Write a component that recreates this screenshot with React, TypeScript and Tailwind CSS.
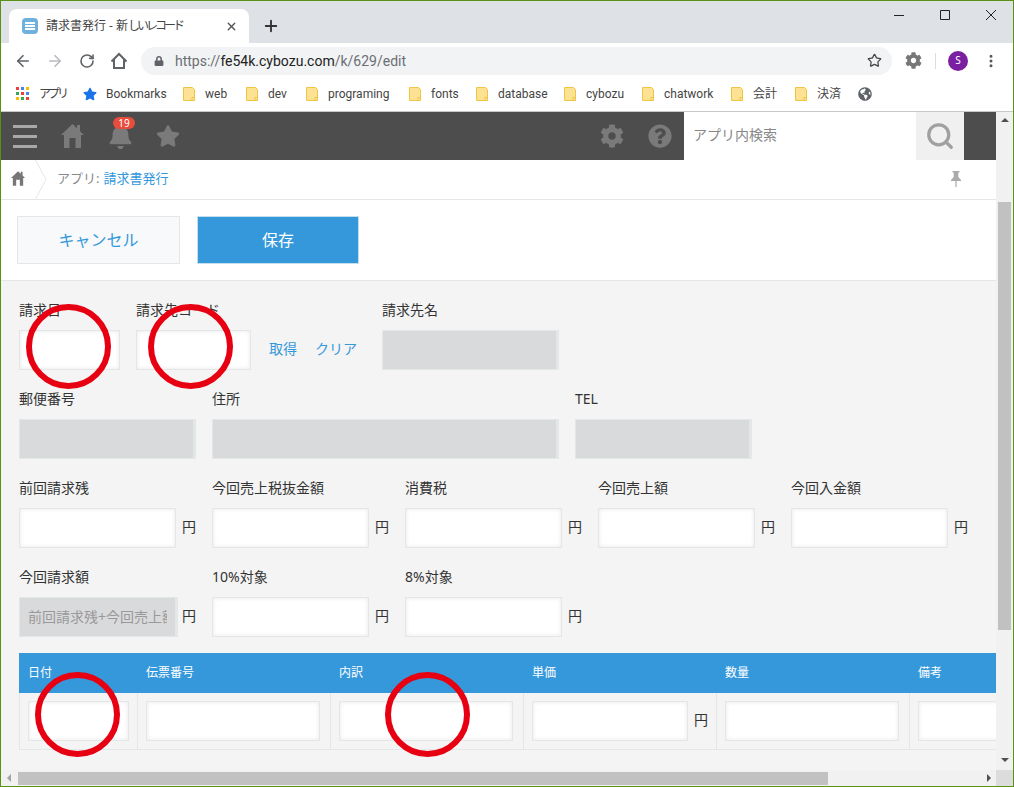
import { ArrowLeft, ArrowRight, RotateCw, Star, X, Plus, MoreVertical, Search } from 'lucide-react';
import { FaBell, FaCog, FaGlobeAmericas, FaLock, FaQuestionCircle, FaStar } from 'react-icons/fa';

const font = "font-['Noto_Sans','Noto_Sans_CJK_JP',sans-serif]";

const bookmarks = [
  { label: 'web', w: 'w-[63px]' },
  { label: 'dev', w: 'w-[60px]' },
  { label: 'programing', w: 'w-[103px]' },
  { label: 'fonts', w: 'w-[67px]' },
  { label: 'database', w: 'w-[88px]' },
  { label: 'cybozu', w: 'w-[78px]' },
  { label: 'chatwork', w: 'w-[89px]' },
  { label: '会計', w: 'w-[64px]' },
  { label: '決済', w: 'w-[63px]' },
];

const appColors = ['#ea4335', '#4285f4', '#fbbc05', '#34a853', '#ea4335', '#4285f4', '#fbbc05', '#34a853', '#ea4335'];

function AppsIcon() {
  return (
    <svg width="13" height="13" viewBox="0 0 13 13">
      {appColors.map((c, i) => (
        <rect key={i} x={(i % 3) * 5} y={Math.floor(i / 3) * 5} width="3" height="3" fill={c} />
      ))}
    </svg>
  );
}

function FolderIcon() {
  return (
    <svg width="12" height="14" viewBox="0 0 12 14" className="shrink-0">
      <path d="M.5.5h9l2 2v11H.5z" fill="#fde293" stroke="#eec643" />
      <path d="M9 10.5h2.5v3H9z" fill="#fde293" stroke="#eec643" />
    </svg>
  );
}

function HomeIcon({ className }: { className: string }) {
  return (
    <svg viewBox="0 0 23 24" className={className} fill="currentColor">
      <path d="M11.5 0 16 4.3V1h3v6.2L23 11h-3v13h-5.5V14h-6v10H3V11H0z" />
    </svg>
  );
}

function PinIcon() {
  return (
    <svg width="10" height="16" viewBox="0 0 10 16" className="mr-[35px] mb-[2px]" fill="#aaa">
      <path d="M1.5 0h7v1.5H7.3V6L10 9v1H5.6v6h-1.2v-6H0V9l2.7-3V1.500H1.5z" />
    </svg>
  );
}

function Input({ className }: { className: string }) {
  return <div className={`h-[40px] shrink-0 bg-white border border-[#e3e7e8] shadow-[inset_0_0_4px_rgba(55,55,55,0.12)] ${className}`} />;
}

function Disabled({ className, text }: { className: string; text?: string }) {
  return (
    <div className={`h-[40px] shrink-0 bg-[#d9dadc] border border-[#e3e7e8] border-r-[3px] pl-[8px] pb-[2px] flex items-center text-[14px] text-[#999] ${className}`}>
      {text && <div className="w-[139px] overflow-hidden whitespace-nowrap">{text}</div>}
    </div>
  );
}

function Label({ children }: { children: string }) {
  return <div className="h-[20px] leading-[18px] text-[14px] text-[#333] mb-[9px] whitespace-nowrap">{children}</div>;
}

function Yen() {
  return <span className="ml-[6px] pb-[3px] text-[14px] text-[#333]">円</span>;
}

function MoneyField({ label }: { label: string }) {
  return (
    <div className="w-[193px] shrink-0">
      <Label>{label}</Label>
      <div className="flex items-center">
        <Input className="w-[157px]" />
        <Yen />
      </div>
    </div>
  );
}

function Circle({ className }: { className: string }) {
  return <div className={`absolute w-[85px] h-[85px] rounded-full border-[6px] border-[#e60012] ${className}`} />;
}

const columns = [
  { label: '日付', cell: 'w-[118px]', input: 'w-[101px]' },
  { label: '伝票番号', cell: 'w-[193px]', input: 'w-[174px]' },
  { label: '内訳', cell: 'w-[193px]', input: 'w-[174px]' },
  { label: '単価', cell: 'w-[193px]', input: 'w-[156px]', yen: true },
  { label: '数量', cell: 'w-[193px]', input: 'w-[174px]' },
  { label: '備考', cell: 'w-[193px]', input: 'w-[174px]' },
];

export default function App() {
  return (
    <div className={`relative w-[1014px] h-[787px] border border-[#5a9216] bg-white overflow-hidden flex flex-col ${font}`}>
      {/* Browser tabs */}
      <div className="h-[42px] shrink-0 bg-[#dee1e6] flex pt-[8px] pl-[8px]">
        <div className="w-[240px] h-[34px] bg-white rounded-t-[8px] flex items-center pl-[13px] pr-[11px]">
          <div className="w-[16px] h-[16px] rounded-[4px] bg-[#6fb0dc] flex flex-col items-center justify-center gap-[1px]">
            <div className="w-[10px] h-[2px] bg-white" />
            <div className="w-[10px] h-[2px] bg-white" />
            <div className="w-[10px] h-[2px] bg-white" />
          </div>
          <span className="ml-[8px] text-[12px] text-[#444] flex-1 whitespace-nowrap overflow-hidden">
            請求書発行 - 新<span className="tracking-[-3px]">しいレコード</span>
          </span>
          <X size={13} strokeWidth={2.5} className="text-[#555]" />
        </div>
        <Plus size={18} strokeWidth={2.5} className="ml-[13px] mt-[8px] text-[#333]" />
        {/* Window controls */}
        <svg width="102" height="10" viewBox="0 0 102 10" className="ml-auto mr-[17px] mt-[1px]" fill="none" stroke="#222">
          <path d="M0 5.500h10" />
          <path d="M46.500.5h9v9h-9z" />
          <path d="m92 0 10 10M102 0 92 10" />
        </svg>
      </div>

      {/* Browser toolbar */}
      <div className="h-[35px] shrink-0 flex items-center text-[#5f6368]">
        <ArrowLeft size={18} strokeWidth={2.2} className="ml-[13px]" />
        <ArrowRight size={18} strokeWidth={2.2} className="ml-[14px] text-[#b9bbbe]" />
        <RotateCw size={16} strokeWidth={2.4} className="ml-[15px]" />
        <svg width="18" height="18" viewBox="0 0 18 18" className="ml-[15px]" fill="none" stroke="#5f6368" strokeWidth="2">
          <path d="M1.5 9.500 9 2l7.500 7.500M4 7.500V16h10V7.500" />
        </svg>
        <div className="ml-[13px] w-[751px] h-[28px] rounded-full bg-[#f1f3f4] flex items-center pl-[13px] pr-[10px]">
          <FaLock size={10} />
          <span className="ml-[11px] pt-[1px] font-['Roboto',sans-serif] text-[14px] text-[#6b6f73] whitespace-nowrap">
            https://<span className="text-[#222]">fe54k.cybozu.com</span>/k/629/edit
          </span>
          <Star size={15} strokeWidth={2} className="ml-auto text-[#444]" />
        </div>
        <FaCog size={17} className="ml-[13px] text-[#777]" />
        <div className="ml-[13px] w-px h-[16px] bg-[#dcdcdc]" />
        <div className="ml-[12px] w-[20px] h-[20px] rounded-full bg-[#7b1fa2] text-white text-[10px] flex items-center justify-center">S</div>
        <MoreVertical size={16} strokeWidth={2.5} className="ml-[15px] text-[#555]" />
      </div>

      {/* Bookmarks bar */}
      <div className="h-[34px] shrink-0 flex items-center pl-[15px] pb-[2px] font-['Roboto','Noto_Sans_CJK_JP',sans-serif] text-[12px] text-[#444] border-b border-[#c8c8c8]">
        <AppsIcon />
        <span className="ml-[10px] w-[44px] text-[12px] tracking-[-3px]">アプリ</span>
        <FaStar size={14} className="text-[#1a73e8]" />
        <span className="ml-[9px] w-[77px]">Bookmarks</span>
        {bookmarks.map(b => (
          <div key={b.label} className={`${b.w} shrink-0 flex items-center gap-[10px] whitespace-nowrap`}>
            <FolderIcon />
            <span>{b.label}</span>
          </div>
        ))}
        <FaGlobeAmericas size={14} className="text-[#5f6368]" />
      </div>

      {/* Page with scrollbars */}
      <div className="flex-1 min-h-0 flex">
        <div className="w-[995px] shrink-0 flex flex-col overflow-hidden">
          {/* App header */}
          <div className="h-[48px] shrink-0 bg-[#4d4d4d] flex items-center">
            <div className="ml-[12px] w-[24px] flex flex-col gap-[7px]">
              <div className="h-[3px] bg-[#a8a8a8]" />
              <div className="h-[3px] bg-[#a8a8a8]" />
              <div className="h-[3px] bg-[#a8a8a8]" />
            </div>
            <HomeIcon className="ml-[24px] w-[23px] h-[24px] text-[#7a7a7a]" />
            <div className="relative ml-[24px]">
              <FaBell size={25} className="text-[#7a7a7a]" />
              <span className="absolute -top-[7px] left-[5px] w-[22px] h-[12px] rounded-full bg-[#e74c3c] text-white text-[10px] leading-[12px] text-center">19</span>
            </div>
            <FaStar size={24} className="ml-[23px] text-[#7a7a7a]" />
            <FaCog size={24} className="ml-[420px] text-[#7a7a7a]" />
            <FaQuestionCircle size={24} className="ml-[24px] text-[#7a7a7a]" />
            <div className="ml-[12px] w-[232px] h-[48px] bg-white flex items-center pl-[9px] pb-[3px] text-[14px] text-[#888]">アプリ内検索</div>
            <div className="w-[48px] h-[48px] bg-[#f0f0f0] flex items-center justify-center">
              <Search size={30} strokeWidth={2.6} className="text-[#a0a0a0]" />
            </div>
          </div>

          {/* Breadcrumb */}
          <div className="relative h-[39px] shrink-0 bg-white flex items-center border-b border-[#e3e7e8] box-content">
            <HomeIcon className="ml-[10px] mb-[2px] w-[14px] h-[15px] text-[#777]" />
            <svg width="12" height="39" viewBox="0 0 12 39" className="ml-[10px]" fill="none" stroke="#e3e7e8">
              <path d="M.5 0 11 19.500.5 39" />
            </svg>
            <span className="ml-[10px] pb-[2px] text-[13px] text-[#888]">アプリ:</span>
            <span className="ml-[4px] pb-[2px] text-[13px] text-[#3498db]">請求書発行</span>
            <div className="ml-auto"><PinIcon /></div>
          </div>

          {/* Save / cancel */}
          <div className="h-[80px] shrink-0 bg-white flex items-center pl-[16px] border-b border-[#e3e7e8] box-content">
            <button className="w-[163px] h-[48px] bg-[#f7f9fa] border border-[#e3e7e8] text-[16px] text-[#3498db]">キャンセル</button>
            <button className="ml-[17px] w-[162px] h-[48px] bg-[#3498db] border border-[#c5dcec] text-[16px] text-white">保存</button>
          </div>

          {/* Form */}
          <div className="flex-1 min-h-0 bg-[#f4f4f4] pl-[18px] pt-[20px] overflow-hidden">
            <div className="flex mb-[20px]">
              <div className="w-[117px] shrink-0">
                <Label>請求日</Label>
                <Input className="w-[101px]" />
              </div>
              <div className="w-[246px] shrink-0">
                <Label>請求先コード</Label>
                <div className="flex items-center text-[14px] text-[#3498db]">
                  <Input className="w-[115px]" />
                  <span className="ml-[18px] pb-[3px]">取得</span>
                  <span className="ml-[18px] pb-[3px]">クリア</span>
                </div>
              </div>
              <div>
                <Label>請求先名</Label>
                <Disabled className="w-[177px]" />
              </div>
            </div>

            <div className="flex mb-[20px]">
              <div className="w-[193px] shrink-0">
                <Label>郵便番号</Label>
                <Disabled className="w-[177px]" />
              </div>
              <div className="w-[363px] shrink-0">
                <Label>住所</Label>
                <Disabled className="w-[347px]" />
              </div>
              <div>
                <Label>TEL</Label>
                <Disabled className="w-[177px]" />
              </div>
            </div>

            <div className="flex mb-[20px]">
              <MoneyField label="前回請求残" />
              <MoneyField label="今回売上税抜金額" />
              <MoneyField label="消費税" />
              <MoneyField label="今回売上額" />
              <MoneyField label="今回入金額" />
            </div>

            <div className="flex mb-[16px]">
              <div className="w-[193px] shrink-0">
                <Label>今回請求額</Label>
                <div className="flex items-center">
                  <Disabled className="w-[159px]" text="前回請求残+今回売上額" />
                  <span className="ml-[4px] pb-[3px] text-[14px] text-[#333]">円</span>
                </div>
              </div>
              <MoneyField label="10%対象" />
              <MoneyField label="8%対象" />
            </div>

            {/* Detail table */}
            <div className="w-[1100px]">
              <div className="flex h-[40px] bg-[#3498db] text-white text-[12px] items-center">
                {columns.map(c => (
                  <div key={c.label} className={`${c.cell} shrink-0 pl-[9px]`}>{c.label}</div>
                ))}
              </div>
              <div className="flex h-[57px] border-b border-l border-[#e3e7e8]">
                {columns.map(c => (
                  <div key={c.label} className={`${c.cell} shrink-0 pl-[8px] pt-[8px] border-r border-[#e3e7e8] flex items-start`}>
                    <Input className={c.input} />
                    {c.yen && <span className="ml-[6px] mt-[8px] text-[14px] text-[#333]">円</span>}
                  </div>
                ))}
              </div>
            </div>
          </div>

          {/* Horizontal scrollbar */}
          <div className="h-[16px] shrink-0 bg-[#f1f1f1] flex items-center">
            <div className="ml-[6px] w-0 h-0 border-y-[4px] border-y-transparent border-r-[4px] border-r-[#a3a3a3]" />
            <div className="ml-[7px] w-[810px] h-[13px] bg-[#c1c1c1]" />
            <div className="ml-[159px] w-0 h-0 border-y-[4px] border-y-transparent border-l-[4px] border-l-[#505050]" />
          </div>
        </div>

        {/* Vertical scrollbar */}
        <div className="w-[17px] shrink-0 bg-[#f1f1f1] flex flex-col items-center">
          <div className="mt-[6px] w-0 h-0 border-x-[4px] border-x-transparent border-b-[4px] border-b-[#505050]" />
          <div className="mt-[80px] w-[13px] h-[428px] bg-[#c1c1c1]" />
          <div className="mt-[128px] w-0 h-0 border-x-[4px] border-x-transparent border-t-[4px] border-t-[#505050]" />
          <div className="mt-auto w-[17px] h-[16px] bg-[#dcdcdc]" />
        </div>
      </div>

      {/* Red circles marked over the screenshot */}
      <Circle className="left-[25px] top-[303px]" />
      <Circle className="left-[147px] top-[303px]" />
      <Circle className="left-[34px] top-[671px]" />
      <Circle className="left-[384px] top-[671px]" />
    </div>
  );
}
